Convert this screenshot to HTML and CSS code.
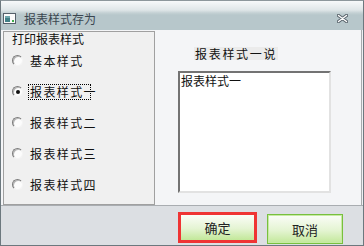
FILE: index.html
```html
<!DOCTYPE html>
<html lang="zh-CN">
<head>
  <meta charset="UTF-8" />
  <title>报表样式存为</title>
  <link rel="stylesheet" href="styles.css">
</head>
<body>
  <div class="window">
    <div class="titlebar">
      <svg class="app-icon" width="13" height="11" viewBox="0 0 13 11">
        <rect x="0.5" y="0.5" width="12" height="10" fill="#fbfbfb" stroke="#55606a"/>
        <rect x="2" y="3" width="5" height="6" fill="#3f7f86"/>
        <rect x="2" y="3" width="5" height="2" fill="#6fa7ad"/>
        <rect x="9" y="7" width="2" height="2" fill="#3fae4a"/>
      </svg>
      <span class="title">报表样式存为</span>
      <svg class="close" width="11" height="9" viewBox="0 0 11 9">
        <path d="M1.5 1.5 L9.5 7.5 M9.5 1.5 L1.5 7.5" stroke="#59646c" stroke-width="3.4" stroke-linecap="round"/>
        <path d="M1.5 1.5 L9.5 7.5 M9.5 1.5 L1.5 7.5" stroke="#ffffff" stroke-width="1.4" stroke-linecap="round"/>
      </svg>
    </div>

    <div class="main">
      <div class="group">
        <div class="legend">打印报表样式</div>
        <div class="options">
          <div class="option"><span class="radio"></span><span class="text">基本样式</span></div>
          <div class="option"><span class="radio checked"></span><span class="text focus">报表样式一</span></div>
          <div class="option"><span class="radio"></span><span class="text">报表样式二</span></div>
          <div class="option"><span class="radio"></span><span class="text">报表样式三</span></div>
          <div class="option"><span class="radio"></span><span class="text">报表样式四</span></div>
        </div>
      </div>
      <div class="side">
        <div class="caption">报表样式一说</div>
        <div class="memo">报表样式一</div>
      </div>
    </div>

    <div class="footer">
      <div class="highlight"><button class="btn">确定</button></div>
      <button class="btn cancel">取消</button>
    </div>
  </div>
</body>
</html>
```

FILE: styles.css
```css
body {
  margin: 0;
  font-family: "Noto Sans CJK SC", "Liberation Sans", sans-serif;
  font-size: 12px;
  color: #111;
}
.window {
  width: 364px;
  height: 246px;
  box-sizing: border-box;
  border: 1px solid #6c787e;
  border-top-color: #8d979c;
  background: #eef0f2;
  display: flex;
  flex-direction: column;
}
.titlebar {
  height: 29px;
  box-sizing: border-box;
  padding: 5px 15px 0 2px;
  display: flex;
  align-items: center;
  background: linear-gradient(#f7f9fa 0, #dfe6e8 9px, #c3d0d3 12px, #b7c7cb 14px, #b7c7cb 100%);
}
.app-icon {
  flex: none;
}
.title {
  margin-left: 8px;
  color: #3a4650;
  font-size: 12px;
  line-height: 13px;
  flex: 1;
}
.close {
  flex: none;
}
.main {
  height: 175px;
  display: flex;
  background: #f4f5f7;
  margin-right: 1px;
  border-right: 1px solid #a8abae;
}
.group {
  width: 152px;
  height: 174px;
  box-sizing: border-box;
  margin: 1px 0 0 2px;
  border: 1px solid #a0a0a0;
  background: #f0f0f0;
}
.legend {
  height: 13px;
  line-height: 13px;
  margin-left: 8px;
  font-size: 12px;
}
.options {
  display: grid;
  grid-auto-rows: 31px;
  padding-left: 8px;
}
.option {
  display: flex;
  align-items: center;
}
.radio {
  width: 11px;
  height: 11px;
  box-sizing: border-box;
  border-radius: 50%;
  border: 1px solid;
  border-color: #7c7c7c #f4f4f4 #f4f4f4 #7c7c7c;
  background: #fcfcfc;
  box-shadow: inset 1px 1px 0 #b8b8b8;
  position: relative;
  flex: none;
}
.radio.checked::after {
  content: "";
  position: absolute;
  left: 3px;
  top: 3px;
  width: 4px;
  height: 4px;
  border-radius: 50%;
  background: #111;
}
.text {
  margin-left: 7px;
  letter-spacing: 1.4px;
  line-height: 14px;
  white-space: nowrap;
}
.text.focus {
  margin-left: 5px;
  display: inline-block;
  width: 60px;
  height: 14px;
  padding-left: 1px;
  border: 1px dotted #000;
  overflow: visible;
}
.side {
  flex: 1;
  padding-left: 23px;
}
.caption {
  display: inline-block;
  margin: 17px 0 0 16px;
  padding: 0 1px;
  height: 13px;
  line-height: 13px;
  background: #ebebeb;
  letter-spacing: 1.7px;
}
.memo {
  width: 153px;
  height: 122px;
  box-sizing: border-box;
  margin-top: 9px;
  padding: 1px;
  border: 2px solid;
  border-color: #737373 #e2e2e2 #e2e2e2 #737373;
  background: #fff;
  line-height: 13px;
}
.footer {
  flex: 1;
  border-top: 1px solid #a9adb1;
  background: #dcdfe3;
  display: flex;
  justify-content: flex-end;
  align-items: flex-start;
  gap: 10px;
  padding: 6px 20px 0 0;
}
.highlight {
  border: 3px solid #ef3434;
  display: flex;
}
.btn {
  width: 73px;
  height: 25px;
  margin: 0;
  padding: 0;
  border: none;
  font-family: inherit;
  font-size: 13px;
  color: #222;
  background: linear-gradient(#fbfdf8, #e4f4d2 55%, #c2e899);
}
.btn.cancel {
  width: 76px;
  height: 30px;
  margin-top: 2px;
  border: 1px solid #78c03e;
  box-shadow: inset 0 0 0 1px #c7eaa3;
}
```
